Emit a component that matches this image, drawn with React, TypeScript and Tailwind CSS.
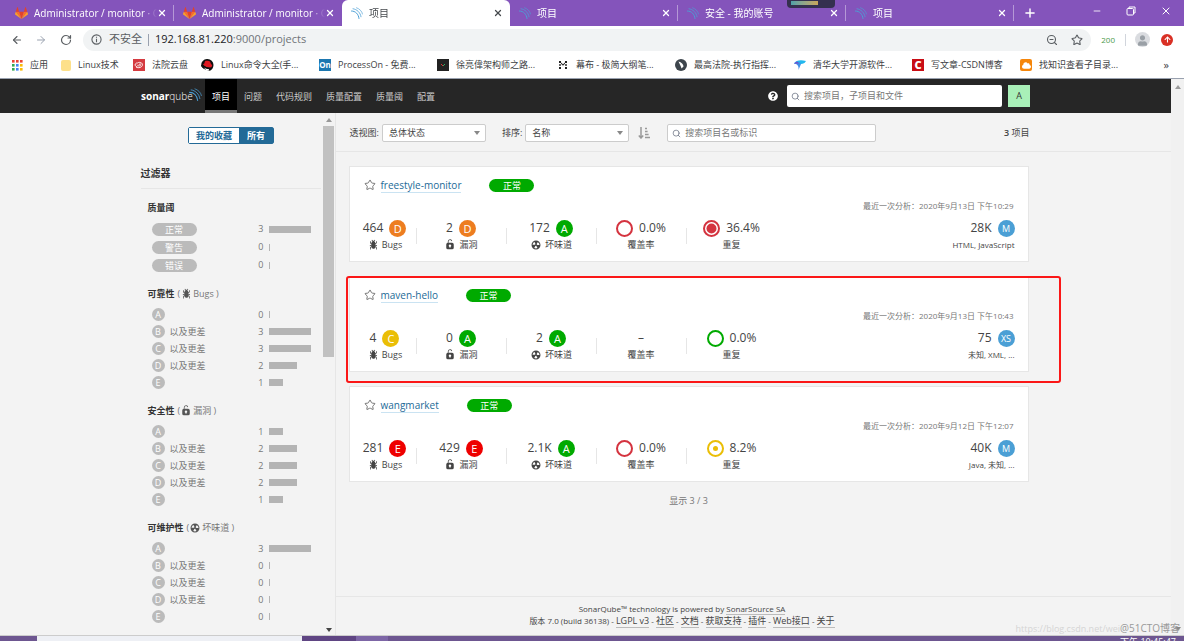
import React from 'react';
import { ArrowLeft, ArrowRight, Minus, Plus, RotateCw, Search, Star, X, ZoomOut } from 'lucide-react';
import { FaArrowUp, FaCloud, FaQuestionCircle, FaUser } from 'react-icons/fa';

type Rating = 'A' | 'B' | 'C' | 'D' | 'E';

type Project = {
    name: string;
    date: string;
    bugs: [string, Rating];
    vulnerabilities: [string, Rating];
    smells: [string, Rating];
    coverage: string | null;
    duplication: string;
    duplicationLevel: 'none' | 'medium' | 'high';
    lines: string;
    size: string;
    languages: string;
    highlighted?: boolean;
};

const projects: Project[] = [
    {
        name: 'freestyle-monitor', date: '2020年9月13日 下午10:29',
        bugs: ['464', 'D'], vulnerabilities: ['2', 'D'], smells: ['172', 'A'],
        coverage: '0.0%', duplication: '36.4%', duplicationLevel: 'high',
        lines: '28K', size: 'M', languages: 'HTML, JavaScript',
    },
    {
        name: 'maven-hello', date: '2020年9月13日 下午10:43',
        bugs: ['4', 'C'], vulnerabilities: ['0', 'A'], smells: ['2', 'A'],
        coverage: null, duplication: '0.0%', duplicationLevel: 'none',
        lines: '75', size: 'XS', languages: '未知, XML, ...', highlighted: true,
    },
    {
        name: 'wangmarket', date: '2020年9月12日 下午12:07',
        bugs: ['281', 'E'], vulnerabilities: ['429', 'E'], smells: ['2.1K', 'A'],
        coverage: '0.0%', duplication: '8.2%', duplicationLevel: 'medium',
        lines: '40K', size: 'M', languages: 'Java, 未知, ...',
    },
];

const ratingColor: Record<Rating, string> = {
    A: 'bg-[#00aa00]',
    B: 'bg-[#b0d513]',
    C: 'bg-[#eabe06]',
    D: 'bg-[#ed7d20]',
    E: 'bg-[#ee0000]',
};

function BugIcon({ className = '' }: { className?: string }) {
    return (
        <svg viewBox="0 0 16 16" className={`w-3 h-3 fill-current ${className}`}>
            <path d="M8.01 10.9885h1v-5h-1v5zm3-2h1.265l.46.771.775-.543-.733-1.228H11.01v-.316l2-2.343v-2.341h-1v1.972l-1 1.172v-1.144h-.029c-.101-.826-.658-1.52-1.436-1.853l1.472-1.349-.676-.736-1.831 1.678-1.831-1.678-.676.736 1.472 1.349c-.778.333-1.335 1.027-1.436 1.853H6.01v1.144l-1-1.172v-1.972h-1v2.341l2 2.343v.316H4.243l-.733 1.228.775.543.46-.771H6.01v.287l-2 1.912v2.801h1v-2.374l1.003-.959c.018 1.289 1.07 2.333 2.363 2.333h.768c.741 0 1.418-.347 1.767-1.09.258-.551.089-.308.099-1.245l1 .959v2.374h1v-2.801l-2-1.912v-.287z" />
        </svg>
    );
}

function LockIcon({ className = '' }: { className?: string }) {
    return (
        <svg viewBox="0 0 16 16" className={`w-3 h-3 fill-current ${className}`}>
            <path d="M10.8 5H6V3.9a2.28 2.28 0 0 1 2-2.5 2.22 2.22 0 0 1 1.8 1.2.48.48 0 0 0 .7.2.48.48 0 0 0 .2-.7A3 3 0 0 0 8 .4a3.34 3.34 0 0 0-3 3.5v1.2a2.16 2.16 0 0 0-2 2.1v4.4a2.22 2.22 0 0 0 2.2 2.2h5.6a2.22 2.22 0 0 0 2.2-2.2V7.2A2.22 2.22 0 0 0 10.8 5zm-2.2 5.5v1.2H7.4v-1.2a1.66 1.66 0 0 1-1.1-1.6A1.75 1.75 0 0 1 8 7.2a1.71 1.71 0 0 1 .6 3.3z" />
        </svg>
    );
}

function SmellIcon({ className = '' }: { className?: string }) {
    return (
        <svg viewBox="0 0 16 16" className={`w-3 h-3 fill-current ${className}`}>
            <path d="M8 2C4.7 2 2 4.7 2 8s2.7 6 6 6 6-2.7 6-6-2.7-6-6-6zm-.5 5.5h.9v.9h-.9v-.9zm-3.8.2c-.1 0-.2-.1-.2-.2 0-.4.1-1.2.6-2S5.3 4.2 5.6 4c.2 0 .3 0 .3.1l1.3 2.3c0 .1 0 .2-.1.2-.1.2-.2.3-.3.5-.1.2-.2.4-.2.5 0 .1-.1.2-.2.2l-2.7-.1zM9.9 12c-.3.2-1.1.5-2 .5-.9 0-1.7-.3-2-.5-.1 0-.1-.2-.1-.3l1.3-2.3c0-.1.1-.1.2-.1.2.1.3.1.5.1s.4 0 .5-.1c.1 0 .2 0 .2.1l1.3 2.3c.2.2.2.3.1.3zm2.5-4.1L9.7 8c-.1 0-.2-.1-.2-.2 0-.2-.1-.4-.2-.5 0-.1-.2-.3-.3-.5-.1 0-.1-.1-.1-.2l1.3-2.3c.1-.1.2-.1.3-.1.3.2 1 .7 1.5 1.5s.6 1.6.6 2c0 .1-.1.2-.2.2z" />
        </svg>
    );
}

function SonarWaves({ className }: { className: string }) {
    return (
        <svg viewBox="0 0 24 24" className={className} fill="none" stroke="#4b9fd5" strokeLinecap="round">
            <path d="M1 8c8 0 14 6 15 15" strokeWidth="2" />
            <path d="M4 3.500c8 1 15 8 16 16" strokeWidth="1.600" />
            <path d="M11 1.500c6 2 11 7 12 12.500" strokeWidth="1.300" />
        </svg>
    );
}

function GitlabIcon() {
    return (
        <svg viewBox="0 0 24 22" className="w-[13px] h-3 shrink-0">
            <path d="M12 22 16.400 8.500H7.600z" fill="#e24329" />
            <path d="M12 22 7.600 8.500H1.400z M12 22 16.400 8.500h6.200z" fill="#fc6d26" />
            <path d="M1.400 8.500 0 12.700c-.1.400 0 .800.300 1L12 22z M22.600 8.500 24 12.700c.1.400 0 .800-.300 1L12 22z" fill="#fca326" />
            <path d="M1.400 8.500h6.200L5 .4c-.200-.400-.800-.400-.900 0z M22.600 8.500h-6.200L19 .4c.200-.400.800-.400.900 0z" fill="#e24329" />
        </svg>
    );
}

const tabs = [
    { title: 'Administrator / monitor · G', icon: 'gitlab', divider: true },
    { title: 'Administrator / monitor · G', icon: 'gitlab' },
    { title: '项目', icon: 'sonar', active: true },
    { title: '项目', icon: 'sonar', divider: true },
    { title: '安全 - 我的账号', icon: 'sonar', divider: true },
    { title: '项目', icon: 'sonar', divider: true },
];

function TabStrip() {
    return (
        <div className="relative flex h-[26px] bg-[#8454bb] text-white pl-[6px]">
            {tabs.map((tab, i) => (
                <div
                    key={i}
                    className={`flex flex-1 min-w-0 max-w-[168px] items-center pl-[9px] ${tab.active ? 'bg-white text-[#45494d] rounded-t-md' : ''}`}
                >
                    {tab.icon === 'gitlab' ? <GitlabIcon /> : <SonarWaves className="w-3 h-3 shrink-0" />}
                    <span className="flex-1 overflow-hidden whitespace-nowrap ml-[6px] text-[10px] leading-4 [mask-image:linear-gradient(to_right,black_88%,transparent)]">
                        {tab.title}
                    </span>
                    <button aria-label="关闭标签页" className="mr-[6px]"><X className="w-[10px] h-[10px]" strokeWidth={3} /></button>
                    <span className={`w-px h-4 ${tab.divider ? 'bg-white/40' : ''}`} />
                </div>
            ))}
            <button aria-label="新标签页" className="ml-[9px]"><Plus className="w-[14px] h-[14px]" strokeWidth={2.500} /></button>
            <div className="ml-auto flex items-center gap-6 pr-3 pb-1">
                <button aria-label="最小化"><Minus className="w-[10px] h-[10px]" strokeWidth={2} /></button>
                <button aria-label="还原">
                    <svg viewBox="0 0 10 10" className="w-[10px] h-[10px]" fill="none" stroke="white">
                        <rect x="1" y="2.500" width="6.500" height="6.500" rx="1" />
                        <path d="M3 2.500V1h6v6H7.500" />
                    </svg>
                </button>
                <button aria-label="关闭"><X className="w-3 h-3" strokeWidth={2} /></button>
            </div>
            <div className="absolute top-0 left-[66.5%] w-12 h-2 rounded-b bg-[#35304f] px-1 pt-px">
                <div className="w-[27px] h-1 bg-linear-to-r from-[#4ea0a8] to-[#c9a659]" />
            </div>
        </div>
    );
}

function AddressBar() {
    return (
        <div className="flex items-center h-[27px] bg-white pl-[11px] pr-[11px] text-[#5a5e62]">
            <button aria-label="后退"><ArrowLeft className="w-3 h-3" strokeWidth={2.200} /></button>
            <button aria-label="前进" className="ml-3 text-gray-400"><ArrowRight className="w-3 h-3" strokeWidth={2} /></button>
            <button aria-label="重新加载" className="ml-[13px]"><RotateCw className="w-3 h-3" strokeWidth={2.400} /></button>
            <div className="flex flex-1 items-center h-[22px] ml-[11px] pl-2 pr-2 rounded-full bg-[#f1f3f4] text-[11px]">
                <svg viewBox="0 0 12 12" className="w-[11px] h-[11px]" fill="none" stroke="#5a5e62" strokeWidth="1.200">
                    <circle cx="6" cy="6" r="5" />
                    <path d="M6 5.300V9M6 3v1.200" />
                </svg>
                <span className="ml-[7px]">不安全</span>
                <span className="w-px h-3 bg-gray-400 mx-[6px]" />
                <span className="flex-1 text-[#707478]"><b className="font-normal text-[#202124]">192.168.81.220</b>:9000/projects</span>
                <button aria-label="缩放"><ZoomOut className="w-3 h-3" strokeWidth={2.200} /></button>
                <button aria-label="收藏" className="ml-[13px]"><Star className="w-3 h-3" strokeWidth={2.200} /></button>
            </div>
            <span className="ml-[10px] text-[8px] text-[#4c9a4c]">200</span>
            <span className="ml-[10px] w-px h-3 bg-gray-300" />
            <span className="ml-[9px] flex items-end justify-center w-[15px] h-[15px] rounded-full bg-[#dadce0] text-[#9aa0a6]"><FaUser className="w-[9px] h-3 pb-px" /></span>
            <span className="ml-[11px] flex items-center justify-center w-3 h-3 rounded-full bg-[#d93025] text-white"><FaArrowUp className="w-[7px] h-[7px]" /></span>
        </div>
    );
}

function AppsIcon() {
    const colors = ['#ea4335', '#ea4335', '#ea4335', '#34a853', '#4285f4', '#fbbc05', '#34a853', '#4285f4', '#fbbc05'];
    return (
        <svg viewBox="0 0 11 11" className="w-[11px] h-[11px]">
            {colors.map((c, i) => <rect key={i} x={(i % 3) * 4} y={Math.floor(i / 3) * 4} width="2.600" height="2.600" fill={c} />)}
        </svg>
    );
}

const bookmarks = [
    { label: '应用', icon: <AppsIcon />, width: 'w-[49px]' },
    { label: 'Linux技术', icon: <span className="w-[10px] h-[11px] rounded-xs bg-[#fde08a]" />, width: 'w-[72px]' },
    {
        label: '法院云盘', width: 'w-[68px]',
        icon: (
            <svg viewBox="0 0 12 12" className="w-3 h-3" fill="none" stroke="white">
                <rect width="12" height="12" fill="#d53b41" stroke="none" />
                <path d="M4.500 8C1 7.500 1.800 3.500 4.500 4c1-1 4.500-1 5 1.500C9.500 8.500 5 9.500 3 8M4 5.800c1.500 2 4 1 4-.300-.500-1-2-.600-2 .500" strokeWidth=".9" />
            </svg>
        ),
    },
    {
        label: 'Linux命令大全(手...', width: 'w-[118px]',
        icon: (
            <svg viewBox="0 0 13 12" className="w-[13px] h-3">
                <path d="M6.500 0A6 6 0 0 1 12.500 6c0 3-2 5-3 5.500C5 11 1 9 .300 7A6 6 0 0 1 6.500 0z" fill="#111" />
                <path d="M4 2.200c1-.700 4-.400 5 .300l1 2.500c1.500.600 1.500 2.500 0 3.200C7 9 3.500 7.500 2.200 5.700c-.200-.700.500-1 1-1z" fill="#e01a22" />
                <path d="M0 6.500c.500-1 1.500-1 2-.700 2 2.200 5 3.300 7.500 3l-.500 2.700C6 11.500 1 9.500 0 6.500z" fill="#111" />
                <path d="M3 8.500c1.500 1 3 1.500 5 1.500l-.500 1.800C6 11.800 4 10.500 3 8.500z" fill="white" />
            </svg>
        ),
    },
    { label: 'ProcessOn - 免费...', icon: <span className="w-3 h-3 bg-[#1c77b0] text-white text-[8px] leading-3 font-bold text-center">On</span>, width: 'w-[118px]' },
    {
        label: '徐亮偉架构师之路...', width: 'w-[120px]',
        icon: (
            <svg viewBox="0 0 12 12" className="w-3 h-3">
                <rect width="12" height="12" fill="#222" />
                <path d="M4 5l2 2" stroke="#d33" />
                <path d="M8 5L6 7" stroke="#3a6" />
            </svg>
        ),
    },
    {
        label: '幕布 - 极简大纲笔...', width: 'w-[118px]',
        icon: (
            <svg viewBox="0 0 12 12" className="w-3 h-3" fill="#222">
                <path d="M2 2h2v2H2zM2.300 5h1.400v2H2.300zM2 8h2v2H2zM8 2h2v2H8zM8.300 5h1.400v2H8.300zM8 8h2v2H8zM4 3.500l2 1.700 2-1.700v1.300L6 6.800l-2-2z" />
            </svg>
        ),
    },
    {
        label: '最高法院-执行指挥...', width: 'w-[119px]',
        icon: (
            <svg viewBox="0 0 12 12" className="w-3 h-3">
                <circle cx="6" cy="6" r="6" fill="#3d454c" />
                <path d="M3.500 2.500c3 .500 5 3 5 5L6.500 9.500C6 7 4.500 5 3.500 2.500z" fill="white" />
            </svg>
        ),
    },
    {
        label: '清华大学开源软件...', width: 'w-[118px]',
        icon: (
            <svg viewBox="0 0 12 12" className="w-3 h-3">
                <path d="M0 4.500C2 1.500 6 .5 12 2c-1 2-3 3-5 3z" fill="#22b8ee" />
                <path d="M0 4.500C2 2 5 2 7 5L4.500 11C5 8 4 5 0 4.500z" fill="#3e8ee8" />
                <path d="M0 4.500 3 2.500l2 2z" fill="#7a49c9" />
            </svg>
        ),
    },
    { label: '写文章-CSDN博客', icon: <span className="w-3 h-3 bg-[#c90d15] text-white text-[11px] leading-3 font-black text-center">C</span>, width: 'w-[108px]' },
    { label: '找知识查看子目录...', icon: <span className="flex items-center justify-center w-3 h-3 rounded-xs bg-[#f5860b] text-white"><FaCloud className="w-[9px] h-[9px]" /></span>, width: 'w-[110px]' },
];

function BookmarksBar() {
    return (
        <nav className="flex items-center h-[26px] pl-3 pr-[15px] pb-px bg-white border-b border-gray-400 text-[9px] text-[#3c4043]">
            {bookmarks.map((b) => (
                <a key={b.label} href="#" className={`flex items-center gap-[7px] whitespace-nowrap ${b.width}`}>
                    {b.icon}
                    {b.label}
                </a>
            ))}
            <span className="ml-auto text-[11px]">»</span>
        </nav>
    );
}

const navItems = ['项目', '问题', '代码规则', '质量配置', '质量阈', '配置'];

function GlobalNav() {
    return (
        <header className="h-[34px] bg-[#262626]">
            <div className="flex h-full items-center max-w-[889px] mx-auto">
                <a href="#" className="flex items-center w-[64px] text-white text-[10px] leading-4">
                    <b className="font-bold">sonar</b><span className="font-light">qube</span>
                    <SonarWaves className="w-[13px] h-[13px] shrink-0 -ml-1 mb-1" />
                </a>
                <nav className="flex h-full text-[9px] text-[#ccc]">
                    {navItems.map((item, i) => (
                        <a
                            key={item}
                            href="#"
                            className={`flex items-center px-[7px] pt-px ${i === 0 ? 'bg-black text-white shadow-[inset_0_-3px_0_#777]' : ''}`}
                        >
                            {item}
                        </a>
                    ))}
                </nav>
                <FaQuestionCircle className="ml-auto w-[10px] h-[10px] text-white" />
                <label className="flex items-center gap-1 w-[215px] h-[22px] ml-[9px] px-1 rounded-xs bg-white text-gray-500">
                    <Search className="w-[9px] h-[9px] shrink-0" />
                    <input aria-label="搜索" placeholder="搜索项目，子项目和文件" className="w-full text-[9px] outline-none placeholder:text-[#777]" />
                </label>
                <button className="ml-[6px] w-[22px] h-[22px] bg-[#a9f0b8] text-[9px] text-[#333]">A</button>
            </div>
        </header>
    );
}

type Row = { label: string; count: number; suffix?: boolean };

const letters = ['A', 'B', 'C', 'D', 'E'];

function ratingRows(counts: number[]): Row[] {
    return letters.map((label, i) => ({ label, count: counts[i], suffix: i > 0 && i < 4 }));
}

function Facet({ title, note, rows, pills }: { title: string; note?: React.ReactNode; rows: Row[]; pills?: boolean }) {
    return (
        <section className="mb-[10px] pl-[7px] pr-[10px] text-[9px]">
            <h3 className="flex items-center h-5 mb-[2px] text-[#777]">
                <b className="font-bold text-[#333] mr-[3px]">{title}</b>
                {note}
            </h3>
            <ul className="pl-1">
                {rows.map((row) => (
                    <li key={row.label} className={`flex items-center ${pills ? 'h-[18px]' : 'h-[17px]'}`}>
                        {pills ? (
                            <span className="w-[45px] h-[13px] rounded-full bg-[#bbb] text-white leading-[13px] text-center">{row.label}</span>
                        ) : (
                            <span className="w-[13px] h-[13px] rounded-full bg-[#bbb] text-white leading-[13px] text-center">{row.label}</span>
                        )}
                        {row.suffix && <span className="ml-[5px] text-[#777]">以及更差</span>}
                        <span className="ml-auto mr-[5px] text-[#777]">{row.count}</span>
                        <span className="w-[42px]">
                            <span className="block h-[7px] min-w-px bg-[#b4b4b4]" style={{ width: `${(row.count / 3) * 100}%` }} />
                        </span>
                    </li>
                ))}
            </ul>
        </section>
    );
}

function Sidebar() {
    return (
        <aside className="flex justify-end w-[calc(50%-250px)] shrink-0 border-r border-[#e6e6e6]">
            <div className="w-[180px] pt-[14px]">
                <div className="flex justify-center w-full pl-px">
                    <div className="flex h-[17px] text-[9px] leading-[15px] font-bold border border-[#236a97] rounded-xs">
                        <button className="px-[7px] bg-white text-[#236a97]">我的收藏</button>
                        <button className="px-2 bg-[#236a97] text-white">所有</button>
                    </div>
                </div>
                <h2 className="h-[45px] pt-[19px] mb-[9px] border-b border-[#e6e6e6] text-[10px] leading-5 font-bold text-[#333]">过滤器</h2>
                <Facet title="质量阈" pills rows={[{ label: '正常', count: 3 }, { label: '警告', count: 0 }, { label: '错误', count: 0 }]} />
                <Facet title="可靠性" note={<>(<BugIcon className="mr-px text-[#555]" /> Bugs )</>} rows={ratingRows([0, 3, 3, 2, 1])} />
                <Facet title="安全性" note={<>(<LockIcon className="mr-px text-[#555]" /> 漏洞 )</>} rows={ratingRows([1, 2, 2, 2, 1])} />
                <Facet title="可维护性" note={<>(<SmellIcon className="mr-px text-[#555]" /> 坏味道 )</>} rows={ratingRows([3, 0, 0, 0, 0])} />
            </div>
            <div className="flex flex-col items-end w-[13px] pt-[5px] pb-[3px] mr-px">
                <svg viewBox="0 0 6 4" className="w-[6px] h-1 mb-1 mr-[2px] fill-[#999]"><path d="M0 4h6L3 0z" /></svg>
                <div className="w-[11px] h-[45%] bg-[#c1c1c1]" />
                <svg viewBox="0 0 6 4" className="w-[6px] h-1 mt-auto mr-[2px] fill-[#444]"><path d="M0 0h6L3 4z" /></svg>
            </div>
        </aside>
    );
}

function Dropdown({ label, value }: { label: string; value: string }) {
    return (
        <label className="flex items-center gap-[3px]">
            {label}:
            <span className="relative">
                <select className="block appearance-none w-[104px] h-[18px] pl-[6px] rounded-xs border border-[#ccc] bg-white text-[#444] text-[9px]">
                    <option>{value}</option>
                </select>
                <svg viewBox="0 0 6 4" className="absolute right-[6px] top-[7px] w-[6px] h-1 fill-[#888] pointer-events-none"><path d="M0 0h6L3 4z" /></svg>
            </span>
        </label>
    );
}

function Toolbar() {
    return (
        <div className="h-[39px] pl-[14px] pt-[2px] border-b border-[#e6e6e6]">
            <div className="flex items-center h-full max-w-[680px] text-[9px] text-[#444] whitespace-nowrap">
                <Dropdown label="透视图" value="总体状态" />
                <span className="w-4" />
                <Dropdown label="排序" value="名称" />
                <button aria-label="升序" className="ml-[9px]">
                    <svg viewBox="0 0 12 12" className="w-3 h-3" fill="none" stroke="#999" strokeWidth="1.500">
                        <path d="M3 0v10M.8 8.500 3 11l2.200-2.500M7 1.500h2M7 4.500h2.600M7 7.500h3.600M7 10.500h5" />
                    </svg>
                </button>
                <label className="flex items-center gap-1 w-[209px] h-[18px] ml-[17px] px-1 rounded-xs border border-[#ccc] bg-white text-gray-500">
                    <Search className="w-[9px] h-[9px] shrink-0" />
                    <input aria-label="搜索项目" placeholder="搜索项目名或标识" className="w-full text-[9px] outline-none placeholder:text-[#777]" />
                </label>
                <span className="ml-auto"><b className="font-semibold">3</b> 项目</span>
            </div>
        </div>
    );
}

function Measure({ value, label, first, last }: { value: React.ReactNode; label: React.ReactNode; first?: boolean; last?: boolean }) {
    return (
        <div className={`flex items-center ${first ? 'w-[63px]' : 'w-[90px]'}`}>
            <div className="flex-1">
                <div className="flex items-center justify-center gap-[6px] h-[18px] text-[12px] text-[#444]">{value}</div>
                <div className="flex items-center justify-center gap-[3px] h-4 text-[9px] text-[#444]">{label}</div>
            </div>
            {!last && <span className="w-px h-4 bg-[#e6e6e6]" />}
        </div>
    );
}

function RatingBadge({ rating }: { rating: Rating }) {
    return <span className={`w-[17px] h-[17px] rounded-full text-white text-[11px] leading-[17px] text-center ${ratingColor[rating]}`}>{rating}</span>;
}

function Duplication({ level }: { level: Project['duplicationLevel'] }) {
    const color = { none: '#00aa00', medium: '#eabe06', high: '#d4333f' }[level];
    const radius = { none: 0, medium: 2.500, high: 5 }[level];
    return (
        <svg viewBox="0 0 17 17" className="w-[17px] h-[17px]">
            <circle cx="8.500" cy="8.500" r="7.500" fill="white" stroke={color} strokeWidth="2" />
            <circle cx="8.500" cy="8.500" r={radius} fill={color} />
        </svg>
    );
}

function ProjectCard({ project }: { project: Project }) {
    return (
        <article className="relative h-24 pt-[10px] border border-[#e6e6e6] bg-white">
            <div className="flex items-center h-4 pl-[14px]">
                <Star className="w-3 h-3 text-[#666]" strokeWidth={1.800} />
                <a href="#" className="ml-[5px] text-[10px] leading-[14px] font-medium text-[#236a97] border-b border-[#cae3f2]">{project.name}</a>
                <span className="ml-7 w-[45px] h-[13px] rounded-full bg-[#00aa00] text-white text-[9px] leading-[13px] text-center">正常</span>
            </div>
            <div className="h-6 pt-[5px] pr-[14px] text-right text-[8px] leading-4 text-[#777]">最近一次分析：{project.date}</div>
            <div className="flex pl-1 pr-[13px] pt-[2px]">
                <Measure first value={<>{project.bugs[0]}<RatingBadge rating={project.bugs[1]} /></>} label={<><BugIcon />Bugs</>} />
                <Measure value={<>{project.vulnerabilities[0]}<RatingBadge rating={project.vulnerabilities[1]} /></>} label={<><LockIcon />漏洞</>} />
                <Measure value={<>{project.smells[0]}<RatingBadge rating={project.smells[1]} /></>} label={<><SmellIcon />坏味道</>} />
                <Measure
                    value={project.coverage ? <><span className="w-[17px] h-[17px] rounded-full border-2 border-[#d4333f]" />{project.coverage}</> : '–'}
                    label="覆盖率"
                />
                <Measure last value={<><Duplication level={project.duplicationLevel} />{project.duplication}</>} label="重复" />
                <div className="ml-auto">
                    <div className="flex items-center justify-end gap-[6px] h-[18px] text-[12px] text-[#444]">
                        {project.lines}
                        <span className="w-[17px] h-[17px] rounded-full bg-[#4b9fd5] text-white text-[9px] leading-[17px] text-center">{project.size}</span>
                    </div>
                    <div className="h-4 text-right text-[8px] leading-4 text-[#444]">{project.languages}</div>
                </div>
            </div>
            {project.highlighted && (
                <div className="absolute -left-1 -right-[33px] -top-px -bottom-3 border-2 border-[#fb1717] rounded-[3px] pointer-events-none" />
            )}
        </article>
    );
}

const footerLinks = ['LGPL v3', '社区', '文档', '获取支持', '插件', 'Web接口', '关于'];

function Footer() {
    return (
        <footer className="mt-auto h-[39px] pt-[6px] border-t border-[#e6e6e6] text-[8px] leading-[12px] text-[#444]">
            <div className="max-w-[693px] text-center">
                <p>SonarQube™ technology is powered by <a href="#" className="border-b border-[#bbb]">SonarSource SA</a></p>
                <p>
                    版本 7.0 (build 36138)
                    {footerLinks.map((link) => (
                        <React.Fragment key={link}> - <a href="#" className="border-b border-[#bbb] text-[9px]">{link}</a></React.Fragment>
                    ))}
                </p>
            </div>
        </footer>
    );
}

export default function App() {
    return (
        <div className="relative flex flex-col min-h-screen bg-[#f3f3f3] font-['Open_Sans','Noto_Sans_CJK_SC',sans-serif]">
            <TabStrip />
            <AddressBar />
            <BookmarksBar />
            <div className="flex flex-1">
                <div className="flex flex-col flex-1 min-w-0">
                    <GlobalNav />
                    <div className="flex flex-1">
                        <Sidebar />
                        <main className="flex flex-col flex-1 min-w-0">
                            <Toolbar />
                            <div className="flex flex-col gap-[14px] max-w-[693px] pl-[13px] pt-[14px]">
                                {projects.map((p) => <ProjectCard key={p.name} project={p} />)}
                                <p className="-mt-[3px] text-center text-[9px] leading-4 text-[#777]">显示 3 / 3</p>
                            </div>
                            <Footer />
                        </main>
                    </div>
                </div>
                <div className="flex flex-col items-center w-[13px] pt-[6px] pb-1 bg-[#f1f1f1]">
                    <svg viewBox="0 0 6 4" className="w-[6px] h-1 fill-[#999]"><path d="M0 4h6L3 0z" /></svg>
                    <svg viewBox="0 0 6 4" className="w-[6px] h-1 mt-auto fill-[#888]"><path d="M0 0h6L3 4z" /></svg>
                </div>
            </div>
            <div className="flex h-[6px] border-t border-[#ccc] bg-[#eef0f5] overflow-hidden">
                <span className="w-[37px] bg-[#6d5690]" />
                <span className="w-[265px]" />
                <span className="w-[54px] bg-[#5f4583]" />
                <span className="w-[32px] bg-[#7d66a6]" />
                <span className="flex-1 pr-2 bg-[#6d5690] text-right text-[9px] leading-3 text-white">下午 10:45:47</span>
            </div>
            <div className="absolute right-1 bottom-[4px] text-[9px] leading-4 text-[#d5d5d5]">
                https://blog.csdn.net/wei<span className="text-[10px] text-[#999]">@51CTO博客</span>
            </div>
        </div>
    );
}
